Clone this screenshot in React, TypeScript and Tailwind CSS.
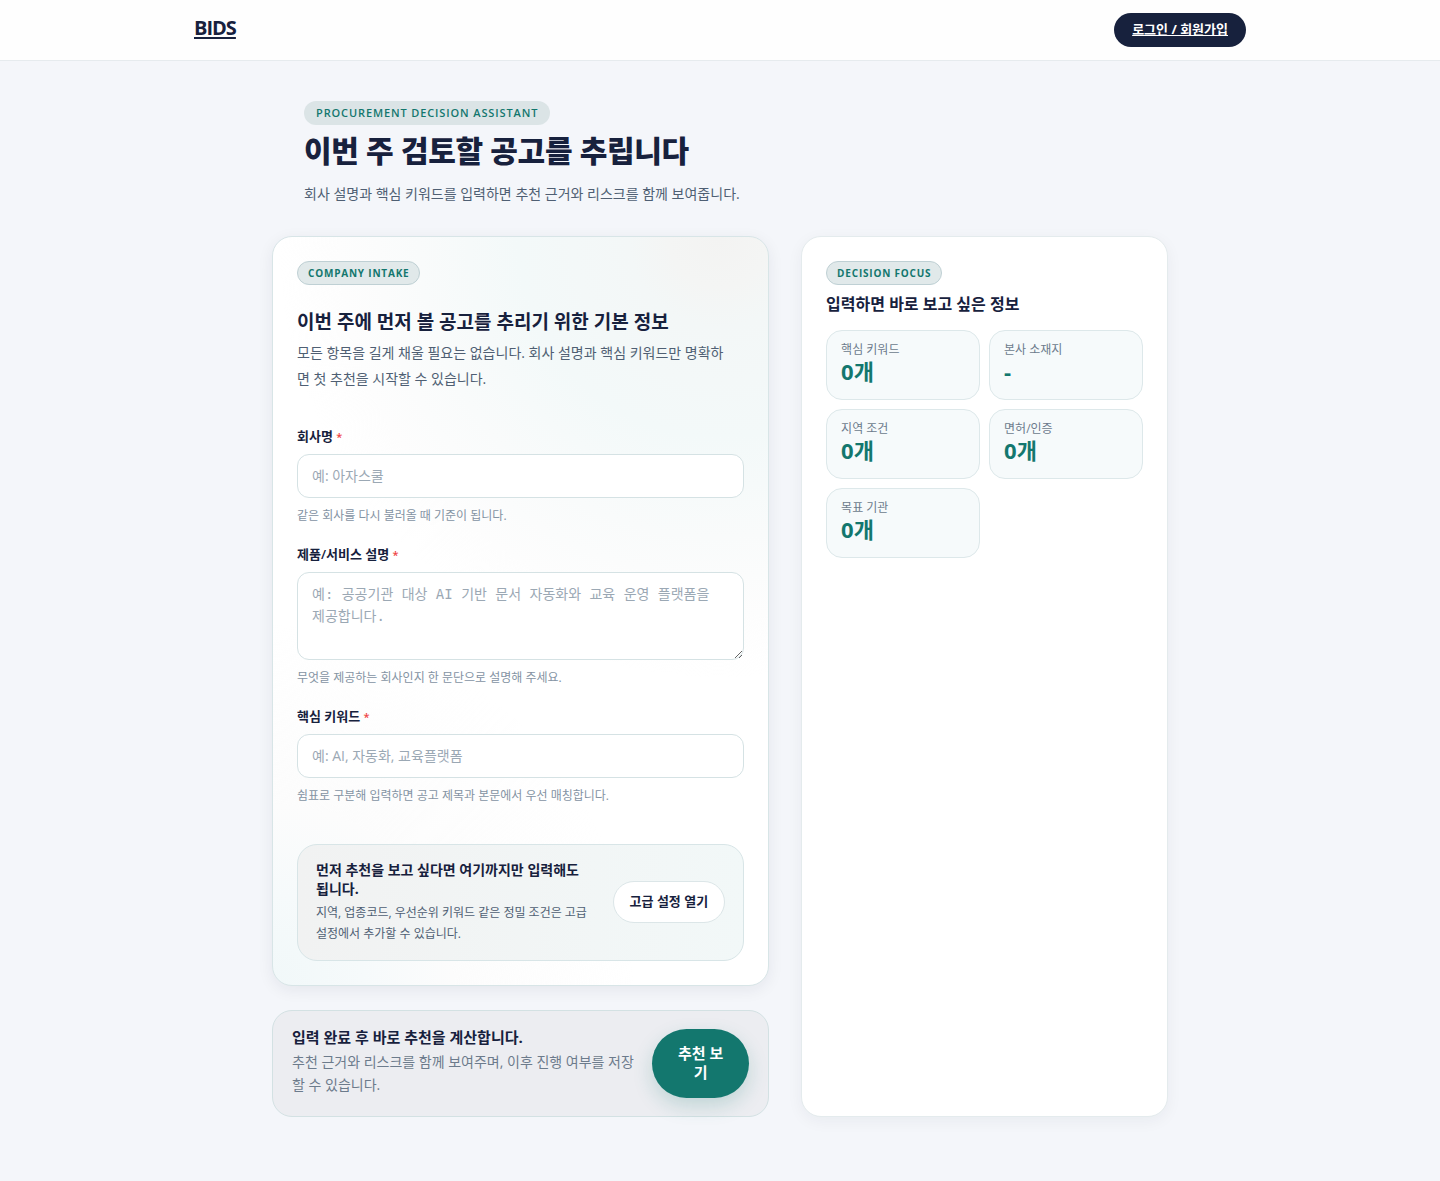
import type { ReactNode } from "react";

function Pill({ children }: { children: ReactNode }) {
  return (
    <div className="flex">
      <span className="flex h-6 items-center rounded-full border border-[#bfd0d4] bg-[#e1e9ea] px-2.5 text-[10px] font-bold tracking-[0.08em] text-[#13776e]">
        {children}
      </span>
    </div>
  );
}

function Field({ id, label, help, children }: { id: string; label: string; help: string; children: ReactNode }) {
  return (
    <div className="flex flex-col">
      <label htmlFor={id} className="text-[13px] leading-[19px] font-semibold text-[#17213d]">
        {label} <span className="text-[11px] text-[#ef4444]">*</span>
      </label>
      <div className="mt-2 flex">{children}</div>
      <p className="mt-2 text-xs leading-[19px] text-[#8493a3]">{help}</p>
    </div>
  );
}

const stats = [
  { label: "핵심 키워드", value: "0개" },
  { label: "본사 소재지", value: "-" },
  { label: "지역 조건", value: "0개" },
  { label: "면허/인증", value: "0개" },
  { label: "목표 기관", value: "0개" },
];

export default function App() {
  return (
    <div className="min-h-screen bg-[#f4f6fa] font-['Open_Sans','Noto_Sans_CJK_KR',sans-serif] text-[#17213d]">
      <header className="border-b border-[#e6ebee] bg-[#fefefe]">
        <div className="mx-auto flex h-15 max-w-[1100px] items-center justify-between px-6">
          <a href="#" className="pb-1 text-xl leading-6 font-bold tracking-tighter underline decoration-2 underline-offset-2">
            BIDS
          </a>
          <a
            href="#login"
            className="flex h-[34px] items-center rounded-full bg-[#17213d] px-[18px] text-[13px] font-bold text-white underline"
          >
            로그인 / 회원가입
          </a>
        </div>
      </header>

      <main className="mx-auto max-w-[960px] px-8 pt-10 pb-16">
        <section className="px-8">
          <div className="flex">
            <span className="flex h-6 items-center rounded-full bg-[#dbe4e6] px-3 text-[11px] font-semibold tracking-[0.08em] text-[#13776e]">
              PROCUREMENT DECISION ASSISTANT
            </span>
          </div>
          <h1 className="mt-1 text-3xl leading-11 font-extrabold tracking-[-0.01em]">이번 주 검토할 공고를 추립니다</h1>
          <p className="mt-2 text-sm leading-[26px] text-[#4f5f73]">
            회사 설명과 핵심 키워드를 입력하면 추천 근거와 리스크를 함께 보여줍니다.
          </p>
        </section>

        <div className="mt-[29px] grid grid-cols-[1.355fr_1fr] gap-8">
          <form className="flex flex-col gap-6">
            <section className="rounded-[20px] border border-[#d8e5e7] bg-white bg-[radial-gradient(circle_at_90%_0px,#f3f3f2_0px,#f4f5f4_50px,#f3f7f7_90px,#f3f9f9_200px,#f9fbfb_300px,#fdfdfd_380px,transparent_440px),radial-gradient(circle_at_0%_100%,#f1f8f9_0px,#f6fafb_90px,#fcfcfc_180px,transparent_360px)] p-6 shadow-[0_4px_16px_rgba(23,33,61,0.07)]">
              <Pill>COMPANY INTAKE</Pill>
              <h2 className="mt-6 text-[19px] leading-[26px] font-bold">이번 주에 먼저 볼 공고를 추리기 위한 기본 정보</h2>
              <p className="mt-[5px] pr-4 text-sm leading-[26px] break-all text-[#4f5f73]">
                모든 항목을 길게 채울 필요는 없습니다. 회사 설명과 핵심 키워드만 명확하면 첫 추천을 시작할 수 있습니다.
              </p>

              <div className="mt-[35px] flex flex-col gap-5">
                <Field id="company" label="회사명" help="같은 회사를 다시 불러올 때 기준이 됩니다.">
                  <input
                    id="company"
                    placeholder="예: 아자스쿨"
                    className="h-11 w-full rounded-xl border border-[#d5e2e4] bg-white px-3.5 pb-0.5 text-sm outline-none placeholder:text-[#9ba8b4]"
                  />
                </Field>
                <Field id="service" label="제품/서비스 설명" help="무엇을 제공하는 회사인지 한 문단으로 설명해 주세요.">
                  <textarea
                    id="service"
                    placeholder="예: 공공기관 대상 AI 기반 문서 자동화와 교육 운영 플랫폼을 제공합니다."
                    className="h-22 w-full resize rounded-xl border border-[#d5e2e4] bg-white px-3.5 py-2.5 font-['DejaVu_Sans_Mono','Noto_Sans_CJK_KR',monospace] text-sm leading-[22px] outline-none placeholder:text-[#9ba8b4]"
                  />
                </Field>
                <Field id="keywords" label="핵심 키워드" help="쉼표로 구분해 입력하면 공고 제목과 본문에서 우선 매칭합니다.">
                  <input
                    id="keywords"
                    placeholder="예: AI, 자동화, 교육플랫폼"
                    className="h-11 w-full rounded-xl border border-[#d5e2e4] bg-white px-3.5 pb-0.5 text-sm outline-none placeholder:text-[#9ba8b4]"
                  />
                </Field>
              </div>

              <div className="mt-[39px] flex items-center justify-between gap-4 rounded-[20px] border border-[#d8e5e7] bg-linear-to-r from-[#f1f2f2] to-[#f2f8f8] px-[18px] pt-[15px] pb-4">
                <div className="min-w-0 flex-1">
                  <h3 className="text-sm leading-[19px] font-bold break-keep">먼저 추천을 보고 싶다면 여기까지만 입력해도 됩니다.</h3>
                  <p className="mt-1 text-xs leading-[21px] break-keep text-[#4f5f73]">
                    지역, 업종코드, 우선순위 키워드 같은 정밀 조건은 고급 설정에서 추가할 수 있습니다.
                  </p>
                </div>
                <button
                  type="button"
                  className="h-[42px] shrink-0 rounded-full border border-[#dce6e8] bg-white px-4 text-[13px] font-bold"
                >
                  고급 설정 열기
                </button>
              </div>
            </section>

            <section className="flex items-center gap-4 rounded-[20px] border border-[#d3e1e3] bg-[#ecedf1] px-[19px] py-[18px]">
              <div className="min-w-0 flex-1 pb-0.5">
                <h3 className="text-[15px] leading-[17px] font-bold">입력 완료 후 바로 추천을 계산합니다.</h3>
                <p className="mt-1 text-sm leading-[23px] break-all text-[#6c7b8c]">
                  추천 근거와 리스크를 함께 보여주며, 이후 진행 여부를 저장할 수 있습니다.
                </p>
              </div>
              <button
                type="submit"
                className="h-[69px] w-[97px] shrink-0 rounded-full bg-[#13776e] px-[22px] pb-0.5 text-[15px] leading-[19px] font-bold break-all text-white shadow-[0_8px_20px_rgba(19,119,110,0.2)]"
              >
                추천 보기
              </button>
            </section>
          </form>

          <aside className="rounded-[20px] border border-[#e4ebed] bg-white p-6 shadow-[0_4px_16px_rgba(23,33,61,0.05)]">
            <Pill>DECISION FOCUS</Pill>
            <h2 className="mt-1.5 text-base leading-[26px] font-bold">입력하면 바로 보고 싶은 정보</h2>
            <dl className="mt-[13px] grid grid-cols-2 gap-[9px]">
              {stats.map((s) => (
                <div key={s.label} className="h-[70px] rounded-2xl border border-[#dde8ea] bg-[#f6fafb] px-3.5 pt-2.5">
                  <dt className="text-xs leading-[18px] text-[#6c7b8c]">{s.label}</dt>
                  <dd className="text-[22px] leading-6 font-bold text-[#13776e]">{s.value}</dd>
                </div>
              ))}
            </dl>
          </aside>
        </div>
      </main>
    </div>
  );
}
